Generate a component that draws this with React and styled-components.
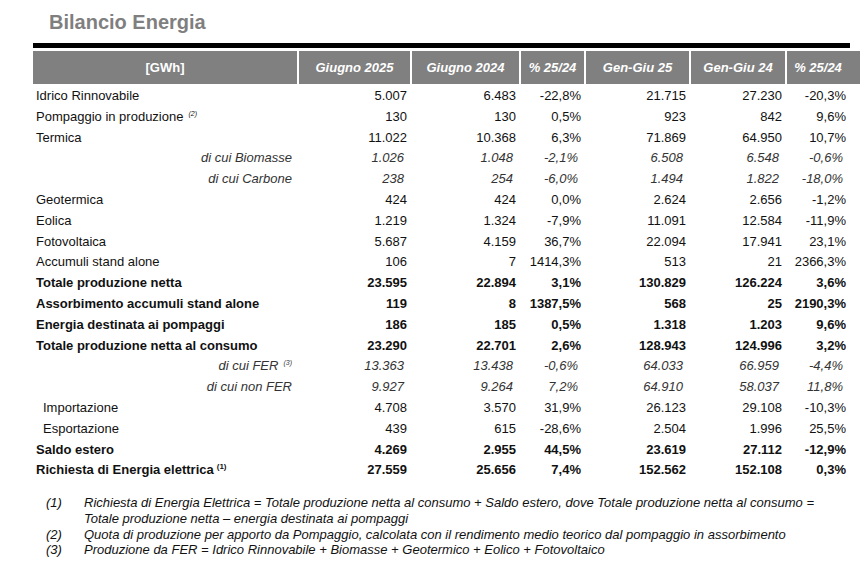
import React from "react";
import styled, { createGlobalStyle } from "styled-components";

const Global = createGlobalStyle`
  html, body { margin: 0; padding: 0; background: #fff; }
  body { font-family: "Liberation Sans", Arial, sans-serif; }
`;

const COLS = "264px 113px 109px 65px 105px 96px 64px";

const Page = styled.div`
  width: 860px;
  height: 563px;
  box-sizing: border-box;
  padding: 10px 0 0 33px;
  background: #fff;
  overflow: hidden;
`;

const Title = styled.h1`
  margin: 0 0 9px 16px;
  font-size: 20px;
  line-height: 24px;
  font-weight: bold;
  color: #7f7f7f;
`;

const Rule = styled.div`
  width: 817px;
  height: 5px;
  background: #000;
  margin-bottom: 3px;
`;

const Header = styled.div`
  display: grid;
  grid-template-columns: ${COLS};
  height: 33px;
  background: #808080;
`;

const HeadCell = styled.div`
  display: flex;
  align-items: center;
  justify-content: center;
  box-sizing: border-box;
  border-left: ${(p) => (p.$first ? "none" : "2px solid #fff")};
  color: #fff;
  font-size: 13px;
  font-weight: bold;
  font-style: ${(p) => (p.$first ? "normal" : "italic")};
`;

const Row = styled.div`
  display: grid;
  grid-template-columns: ${COLS};
  box-sizing: border-box;
  height: 20.8px;
  padding-top: 4px;
  line-height: 16.8px;
  font-size: 13px;
  font-weight: ${(p) => (p.$kind === "bold" ? "bold" : "normal")};
  font-style: ${(p) => (p.$kind === "sub" ? "italic" : "normal")};
  color: ${(p) => (p.$kind === "sub" ? "#333" : "#111")};
  white-space: nowrap;
`;

const Label = styled.div`
  text-align: ${(p) => (p.$kind === "sub" ? "right" : "left")};
  padding-left: ${(p) => (p.$kind === "indent" ? "10px" : "3px")};
  padding-right: ${(p) => (p.$kind === "sub" ? "5px" : "0")};
`;

const Num = styled.div`
  text-align: right;
  padding-right: ${(p) => (p.$kind === "sub" ? "6px" : "3px")};
`;

const Sup = styled.sup`
  font-size: ${(p) => (p.$bold ? "8px" : "7px")};
  font-style: ${(p) => (p.$bold ? "normal" : "italic")};
  vertical-align: 5px;
  line-height: 0;
  margin-left: ${(p) => (p.$gap ? "5px" : "3px")};
`;

const Notes = styled.div`
  margin-top: 16px;
  padding-left: 13px;
  display: grid;
  grid-template-columns: 38px auto;
  font-size: 13px;
  font-style: italic;
  line-height: 15.7px;
  color: #111;
  white-space: nowrap;
`;

const NoteNum = styled.div``;
const NoteText = styled.div``;

const HEAD = ["[GWh]", "Giugno 2025", "Giugno 2024", "% 25/24", "Gen-Giu 25", "Gen-Giu 24", "% 25/24"];

const ROWS = [
  { l: "Idrico Rinnovabile", v: ["5.007", "6.483", "-22,8%", "21.715", "27.230", "-20,3%"] },
  { l: "Pompaggio in produzione", s: "(2)", gap: true, v: ["130", "130", "0,5%", "923", "842", "9,6%"] },
  { l: "Termica", v: ["11.022", "10.368", "6,3%", "71.869", "64.950", "10,7%"] },
  { l: "di cui Biomasse", k: "sub", v: ["1.026", "1.048", "-2,1%", "6.508", "6.548", "-0,6%"] },
  { l: "di cui Carbone", k: "sub", v: ["238", "254", "-6,0%", "1.494", "1.822", "-18,0%"] },
  { l: "Geotermica", v: ["424", "424", "0,0%", "2.624", "2.656", "-1,2%"] },
  { l: "Eolica", v: ["1.219", "1.324", "-7,9%", "11.091", "12.584", "-11,9%"] },
  { l: "Fotovoltaica", v: ["5.687", "4.159", "36,7%", "22.094", "17.941", "23,1%"] },
  { l: "Accumuli stand alone", v: ["106", "7", "1414,3%", "513", "21", "2366,3%"] },
  { l: "Totale produzione netta", k: "bold", v: ["23.595", "22.894", "3,1%", "130.829", "126.224", "3,6%"] },
  { l: "Assorbimento accumuli stand alone", k: "bold", v: ["119", "8", "1387,5%", "568", "25", "2190,3%"] },
  { l: "Energia destinata ai pompaggi", k: "bold", v: ["186", "185", "0,5%", "1.318", "1.203", "9,6%"] },
  { l: "Totale produzione netta al consumo", k: "bold", v: ["23.290", "22.701", "2,6%", "128.943", "124.996", "3,2%"] },
  { l: "di cui FER", s: "(3)", gap: true, k: "sub", v: ["13.363", "13.438", "-0,6%", "64.033", "66.959", "-4,4%"] },
  { l: "di cui non FER", k: "sub", v: ["9.927", "9.264", "7,2%", "64.910", "58.037", "11,8%"] },
  { l: "Importazione", k: "indent", v: ["4.708", "3.570", "31,9%", "26.123", "29.108", "-10,3%"] },
  { l: "Esportazione", k: "indent", v: ["439", "615", "-28,6%", "2.504", "1.996", "25,5%"] },
  { l: "Saldo estero", k: "bold", v: ["4.269", "2.955", "44,5%", "23.619", "27.112", "-12,9%"] },
  { l: "Richiesta di Energia elettrica", s: "(1)", k: "bold", v: ["27.559", "25.656", "7,4%", "152.562", "152.108", "0,3%"] },
];

const NOTES = [
  [
    "(1)",
    <>
      Richiesta di Energia Elettrica = Totale produzione netta al consumo + Saldo estero, dove Totale produzione netta al consumo =
      <br />
      Totale produzione netta – energia destinata ai pompaggi
    </>,
  ],
  ["(2)", "Quota di produzione per apporto da Pompaggio, calcolata con il rendimento medio teorico dal pompaggio in assorbimento"],
  ["(3)", "Produzione da FER = Idrico Rinnovabile + Biomasse + Geotermico + Eolico + Fotovoltaico"],
];

export default function App() {
  return (
    <Page>
      <Global />
      <Title>Bilancio Energia</Title>
      <Rule />
      <Header>
        {HEAD.map((h, i) => (
          <HeadCell key={i} $first={i === 0}>
            {h}
          </HeadCell>
        ))}
      </Header>
      {ROWS.map((r, i) => (
        <Row key={i} $kind={r.k}>
          <Label $kind={r.k}>
            {r.l}
            {r.s && (
              <Sup $bold={r.k === "bold"} $gap={r.gap}>
                {r.s}
              </Sup>
            )}
          </Label>
          {r.v.map((v, j) => (
            <Num key={j} $kind={r.k}>
              {v}
            </Num>
          ))}
        </Row>
      ))}
      <Notes>
        {NOTES.map(([n, t], i) => (
          <React.Fragment key={i}>
            <NoteNum>{n}</NoteNum>
            <NoteText>{t}</NoteText>
          </React.Fragment>
        ))}
      </Notes>
    </Page>
  );
}
